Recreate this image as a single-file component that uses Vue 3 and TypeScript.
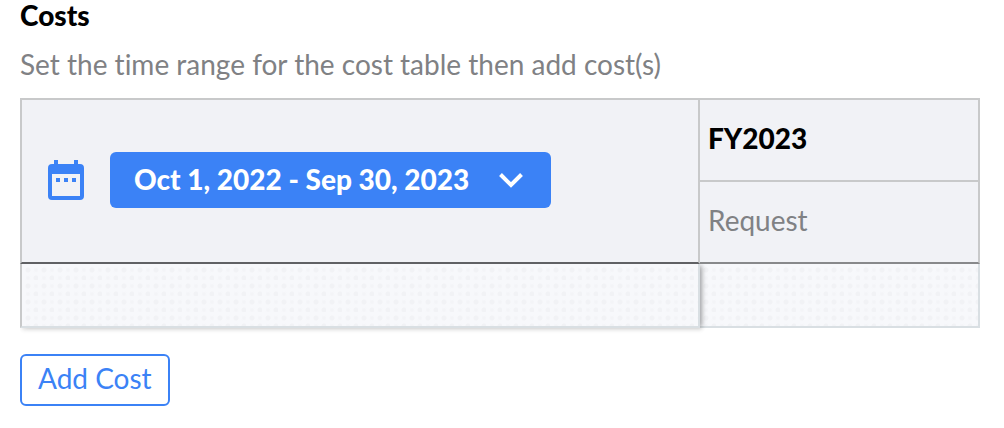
<script setup lang="ts">
import { ref } from 'vue'

interface FiscalYear {
  id: string
  label: string
  column: string
}

const range = ref('Oct 1, 2022 - Sep 30, 2023')
const years: FiscalYear[] = [{ id: 'fy2023', label: 'FY2023', column: 'Request' }]
</script>

<template>
  <main class="costs">
    <h2 class="title">Costs</h2>
    <p class="hint">Set the time range for the cost table then add cost(s)</p>
    <table class="cost-table">
      <thead>
        <tr>
          <th class="range-cell" rowspan="2">
            <div class="range">
              <svg class="calendar" viewBox="0 0 36 40" aria-hidden="true">
                <path
                  fill="#3b82f6"
                  fill-rule="evenodd"
                  d="M6 0h4v4h16V0h4v4h2a4 4 0 0 1 4 4v28a4 4 0 0 1-4 4H4a4 4 0 0 1-4-4V8a4 4 0 0 1 4-4h2zM4 14v22h28V14zM8 18h4v4H8zM16 18h4v4h-4zM24 18h4v4h-4z"
                />
              </svg>
              <button class="range-button" type="button">
                <span class="range-label">{{ range }}</span>
                <svg class="chevron" viewBox="0 0 24 16" aria-hidden="true">
                  <path d="M1.500 2.500 12 13 22.500 2.500" fill="none" stroke="#fff" stroke-width="4" />
                </svg>
              </button>
            </div>
          </th>
          <th v-for="year in years" :key="year.id" class="year">{{ year.label }}</th>
        </tr>
        <tr>
          <th v-for="year in years" :key="year.id" class="column">{{ year.column }}</th>
        </tr>
      </thead>
      <tbody>
        <tr>
          <td class="empty frozen"></td>
          <td v-for="year in years" :key="year.id" class="empty"></td>
        </tr>
      </tbody>
    </table>
    <button class="add" type="button">Add Cost</button>
  </main>
</template>

<style>
body {
  margin: 0;
  background: #fff;
}
</style>

<style scoped>
.costs {
  padding: 0 24px 22px 20px;
  font-family: Lato, "Liberation Sans", sans-serif;
  font-size: 28px;
  font-variant-ligatures: none;
  line-height: 30px;
  color: #808184;
}

.title {
  margin: 0;
  font-size: 28px;
  font-weight: 900;
  color: #000;
}

.hint {
  margin: 19px 0;
}

.cost-table {
  width: 100%;
  table-layout: fixed;
  border-collapse: separate;
  border-spacing: 0;
}

th,
td {
  box-sizing: border-box;
  padding: 0 8px 4px;
  text-align: left;
  border: 0 solid #c8c9ca;
}

th {
  background: #f1f2f6;
  font-weight: 400;
}

.range-cell {
  width: 680px;
  padding: 0 26px 2px;
  border-width: 2px;
  border-bottom-color: #606164;
}

.range {
  display: flex;
  align-items: center;
  gap: 26px;
}

.calendar {
  width: 36px;
  height: 40px;
}

.range-button {
  display: flex;
  align-items: center;
  gap: 30px;
  height: 56px;
  padding: 0 28px 0 24px;
  border: 0;
  border-radius: 6px;
  background: #3b82f6;
  color: #fff;
  font: inherit;
  font-weight: 900;
}

.range-label {
  padding-bottom: 2px;
}

.chevron {
  width: 24px;
  height: 16px;
}

.year {
  height: 84px;
  border-width: 2px 2px 2px 0;
  font-weight: 900;
  color: #000;
}

.column {
  height: 82px;
  border-width: 0 2px 2px 0;
  border-bottom-color: #88898b;
}

.empty {
  height: 64px;
  border-width: 0 2px 2px 0;
  border-color: #d9dfe3;
  background:
    radial-gradient(circle at 6px 6px, #f1f2f5 2px, transparent 3px) 0 0 / 16px 16px,
    radial-gradient(circle at 14px 14px, #f1f2f5 2px, transparent 3px) 0 0 / 16px 16px,
    radial-gradient(circle at 14px 6px, #f3f4f7 1px, transparent 3px) 0 0 / 16px 16px,
    radial-gradient(circle at 6px 14px, #f3f4f7 1px, transparent 3px) 0 0 / 16px 16px,
    #f7f8fb;
}

.frozen {
  position: relative;
  border-left: 2px solid #c8c9ca;
  box-shadow:
    4px 0 5px -2px rgba(0, 0, 0, 0.25),
    2px 2px 4px rgba(0, 0, 0, 0.12);
  clip-path: inset(0 -8px -6px 0);
}

.add {
  display: block;
  height: 52px;
  margin-top: 26px;
  padding: 0 16px 4px;
  border: 2px solid #3b82f6;
  border-radius: 6px;
  background: #fff;
  color: #3b82f6;
  font: inherit;
}
</style>
